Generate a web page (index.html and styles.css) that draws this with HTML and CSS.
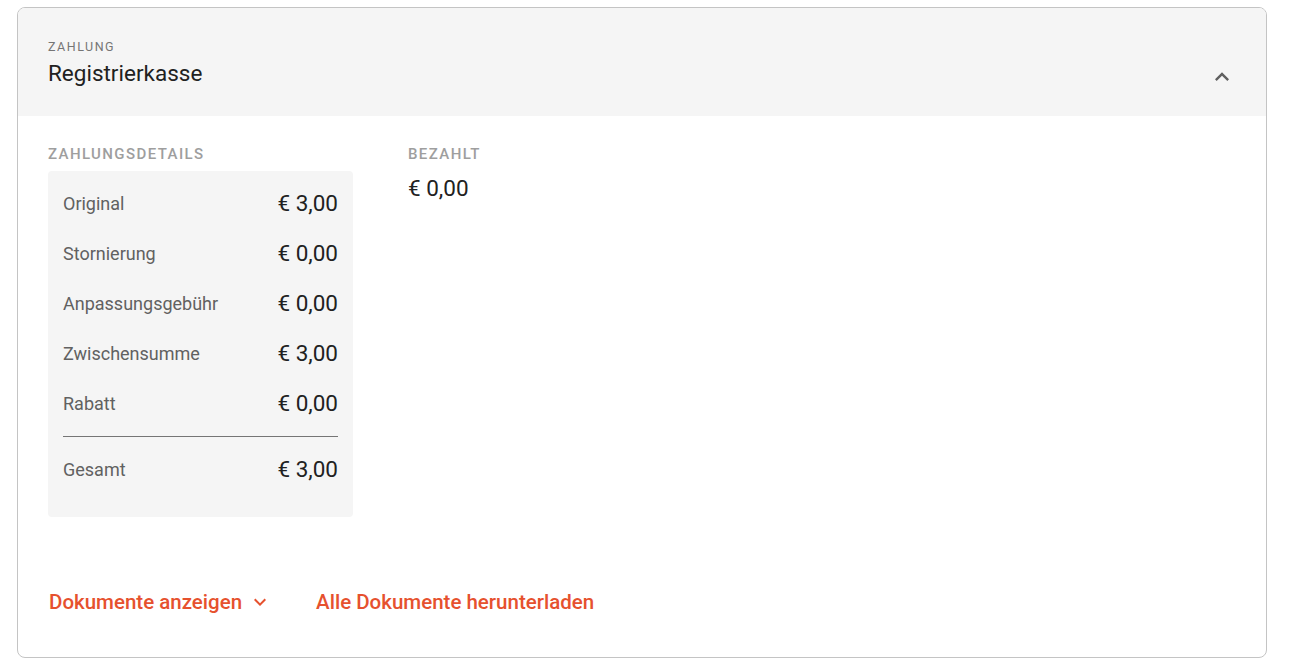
FILE: index.html
```html
<!DOCTYPE html>
<html lang="de">
<head>
    <meta charset="UTF-8">
    <title>Zahlung</title>
    <link rel="stylesheet" href="styles.css">
</head>
<body>
    <div class="card">
        <div class="card-header">
            <div class="header-text">
                <div class="overline">Zahlung</div>
                <div class="title">Registrierkasse</div>
            </div>
            <svg class="collapse" width="28" height="28" viewBox="0 0 24 24">
                <path d="M7.41 15.41 12 10.83l4.59 4.58L18 14l-6-6-6 6z" fill="#616161"/>
            </svg>
        </div>
        <div class="card-body">
            <div class="columns">
                <div class="column">
                    <div class="section-label">Zahlungsdetails</div>
                    <div class="details">
                        <div class="row"><span class="label">Original</span><span class="value">€ 3,00</span></div>
                        <div class="row"><span class="label">Stornierung</span><span class="value">€ 0,00</span></div>
                        <div class="row"><span class="label">Anpassungsgebühr</span><span class="value">€ 0,00</span></div>
                        <div class="row"><span class="label">Zwischensumme</span><span class="value">€ 3,00</span></div>
                        <div class="row"><span class="label">Rabatt</span><span class="value">€ 0,00</span></div>
                        <div class="divider"></div>
                        <div class="row"><span class="label">Gesamt</span><span class="value">€ 3,00</span></div>
                    </div>
                </div>
                <div class="column">
                    <div class="section-label">Bezahlt</div>
                    <div class="paid">€ 0,00</div>
                </div>
            </div>
            <div class="actions">
                <a class="link" href="#">
                    Dokumente anzeigen
                    <svg width="24" height="24" viewBox="0 0 24 24">
                        <path d="M7.41 8.59 12 13.17l4.59-4.58L18 10l-6 6-6-6z" fill="#e6512e"/>
                    </svg>
                </a>
                <a class="link" href="#">Alle Dokumente herunterladen</a>
            </div>
        </div>
    </div>
</body>
</html>
```

FILE: styles.css
```css
body {
    margin: 0;
    font-family: Roboto, "Liberation Sans", sans-serif;
    background: #fff;
    color: #212121;
}

.card {
    margin: 7px 29px 0 17px;
    border: 1px solid #c4c4c4;
    border-radius: 8px;
    overflow: hidden;
}

.card-header {
    background: #f5f5f5;
    display: flex;
    align-items: flex-end;
    justify-content: space-between;
    padding: 30px 30px 29px 30px;
}

.overline {
    font-size: 12.5px;
    line-height: 16px;
    letter-spacing: 1.5px;
    text-transform: uppercase;
    color: #757575;
    margin-top: 1px;
}

.title {
    font-size: 22.5px;
    line-height: 28px;
    margin-top: 4px;
    color: #212121;
}

.collapse {
    margin-bottom: -4px;
}

.card-body {
    padding: 28px 30px 43px 30px;
}

.columns {
    display: flex;
    gap: 55px;
}

.section-label {
    font-size: 15px;
    line-height: 20px;
    font-weight: 500;
    letter-spacing: 1.4px;
    text-transform: uppercase;
    color: #9e9e9e;
}

.details {
    width: 275px;
    margin-top: 7px;
    padding: 7px 15px 23px 15px;
    background: #f5f5f5;
    border-radius: 4px;
}

.row {
    display: flex;
    justify-content: space-between;
    align-items: center;
    height: 50px;
}

.label {
    font-size: 18px;
    color: #616161;
}

.value {
    font-size: 22.5px;
    color: #212121;
}

.divider {
    height: 1px;
    background: #757575;
    margin: 8px 0 7px 0;
}

.paid {
    font-size: 22.5px;
    line-height: 28px;
    margin-top: 10px;
}

.actions {
    display: flex;
    gap: 44px;
    margin-top: 73px;
    padding-left: 1px;
}

.link {
    display: flex;
    align-items: center;
    gap: 6px;
    font-size: 20.5px;
    line-height: 24px;
    font-weight: 500;
    color: #e6512e;
    text-decoration: none;
}
```
